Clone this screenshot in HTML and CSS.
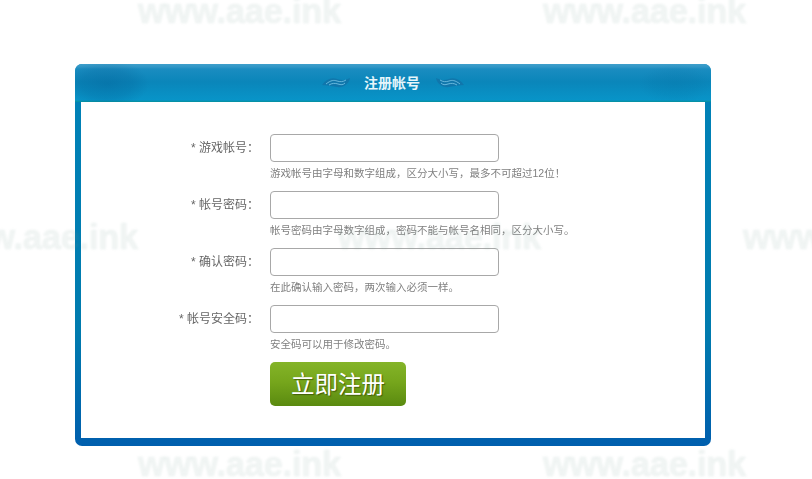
FILE: index.html
```html
<!DOCTYPE html>
<html lang="zh-CN">
<head>
<meta charset="utf-8">
<title>注册帐号</title>
<link rel="stylesheet" href="styles.css">
</head>
<body>
<main class="panel">
  <header class="panel-head">
    <svg class="wave" viewBox="0 0 28 12" aria-hidden="true"><path class="wave-fill" d="M0 8C4 2 10 0 15 2S24 3 28 1C27 7 21 11 15 10S5 8 0 8Z"/><path class="wave-line" d="M4 7C9 3 12 3 15 4S21 5 24 3M7 8C10 6 13 6 16 7S21 8 23 6"/></svg>
    <h1 class="panel-title">注册帐号</h1>
    <svg class="wave wave-right" viewBox="0 0 28 12" aria-hidden="true"><path class="wave-fill" d="M0 8C4 2 10 0 15 2S24 3 28 1C27 7 21 11 15 10S5 8 0 8Z"/><path class="wave-line" d="M4 7C9 3 12 3 15 4S21 5 24 3M7 8C10 6 13 6 16 7S21 8 23 6"/></svg>
  </header>
  <form class="panel-body">
    <div class="row">
      <label class="label">* 游戏帐号：</label>
      <div class="field"><input class="input" type="text"><p class="hint">游戏帐号由字母和数字组成，区分大小写，最多不可超过12位！</p></div>
    </div>
    <div class="row">
      <label class="label">* 帐号密码：</label>
      <div class="field"><input class="input" type="password"><p class="hint">帐号密码由字母数字组成，密码不能与帐号名相同，区分大小写。</p></div>
    </div>
    <div class="row">
      <label class="label">* 确认密码：</label>
      <div class="field"><input class="input" type="password"><p class="hint">在此确认输入密码，两次输入必须一样。</p></div>
    </div>
    <div class="row">
      <label class="label">* 帐号安全码：</label>
      <div class="field"><input class="input" type="text"><p class="hint">安全码可以用于修改密码。</p></div>
    </div>
    <div class="row">
      <div class="spacer"></div>
      <button class="submit" type="button">立即注册</button>
    </div>
  </form>
</main>
<div class="marks" aria-hidden="true">
  <span class="mark m1">www.aae.ink</span>
  <span class="mark m2">www.aae.ink</span>
  <span class="mark m3">www.aae.ink</span>
  <span class="mark m4">www.aae.ink</span>
  <span class="mark m5">www.aae.ink</span>
  <span class="mark m6">www.aae.ink</span>
  <span class="mark m7">www.aae.ink</span>
</div>
</body>
</html>
```
FILE: styles.css
```css
* { box-sizing: border-box; }
html, body { margin: 0; height: 100%; }
body {
  width: 812px;
  height: 479px;
  overflow: hidden;
  background: #fff;
  font-family: "Liberation Sans", "Noto Sans CJK SC", sans-serif;
  padding: 64px 0 0 75px;
  position: relative;
}
.panel {
  width: 636px;
  height: 382px;
  border-radius: 7px;
  background: linear-gradient(to bottom, #0082b8 0, #007bae 70%, #0062ad 96%, #005fae 100%);
  padding: 0 6px 8px;
  display: flex;
  flex-direction: column;
  overflow: hidden;
}
.panel-head {
  height: 38px;
  margin: 0 -6px;
  background:
    radial-gradient(ellipse 42px 24px at 32px 20px, rgba(0, 80, 135, .3), rgba(0, 80, 135, .18) 60%, rgba(0, 80, 135, 0)),
    radial-gradient(ellipse 36px 20px at 600px 20px, rgba(0, 90, 140, .14), rgba(0, 90, 140, .08) 60%, rgba(0, 90, 140, 0)),
    linear-gradient(to bottom, #3f9fcb 0, #2f96c6 3px, #1a8cc0 5px, #0a86ba 18px, #0894c8 36px, #05909a 38px);
  display: flex;
  align-items: center;
  justify-content: center;
  gap: 14px;
}
.panel-title {
  margin: 0;
  font-size: 14px;
  line-height: 20px;
  font-weight: 700;
  color: #e6f6fb;
  width: 58px;
}
.wave { width: 28px; height: 12px; }
.wave-fill { fill: #1272a8; opacity: .8; }
.wave-line { fill: none; stroke: #7cc8e8; stroke-width: .8; }
.wave-right { transform: scaleX(-1); }
.panel-body {
  flex: 1;
  background: #fff;
  padding-top: 32px;
  display: flex;
  flex-direction: column;
}
.row { display: flex; align-items: flex-start; height: 57px; }
.label {
  width: 178px;
  margin-right: 11px;
  flex: none;
  text-align: right;
  font-size: 12px;
  line-height: 28px;
  color: #666;
  filter: blur(.3px);
}
.spacer { width: 189px; flex: none; }
.field { display: flex; flex-direction: column; }
.input {
  width: 229px;
  height: 28px;
  border: 1px solid #a8a8a8;
  border-radius: 4px;
  background: #fff;
  display: block;
  padding: 0;
}
.hint {
  margin: 4px 0 0;
  font-size: 10.5px;
  line-height: 14px;
  color: #808080;
  white-space: nowrap;
  filter: blur(.3px);
}
.submit {
  width: 136px;
  height: 44px;
  padding: 0 0 2px;
  border: 0;
  border-radius: 5px;
  background: linear-gradient(to bottom, #84b428 0, #76a61c 45%, #5a8a10 100%);
  color: #fff;
  font-family: "Noto Sans CJK SC", sans-serif;
  font-weight: 400;
  font-size: 23.5px;
  text-shadow: 1px 1px 1px rgba(50, 70, 0, .7);
}
.marks { position: absolute; inset: 0; pointer-events: none; overflow: hidden; }
.mark {
  position: absolute;
  font-weight: 700;
  font-size: 34.5px;
  line-height: 36px;
  letter-spacing: -.25px;
  color: rgba(120, 160, 150, .1);
  -webkit-text-stroke: .6px rgba(120, 160, 150, .1);
  filter: blur(1px);
  white-space: nowrap;
}
.m1 { left: 138px; top: -7px; }
.m2 { left: 543px; top: -7px; }
.m3 { left: -65px; top: 219px; }
.m4 { left: 338px; top: 219px; }
.m5 { left: 743px; top: 219px; }
.m6 { left: 138px; top: 446px; }
.m7 { left: 543px; top: 446px; }
```
